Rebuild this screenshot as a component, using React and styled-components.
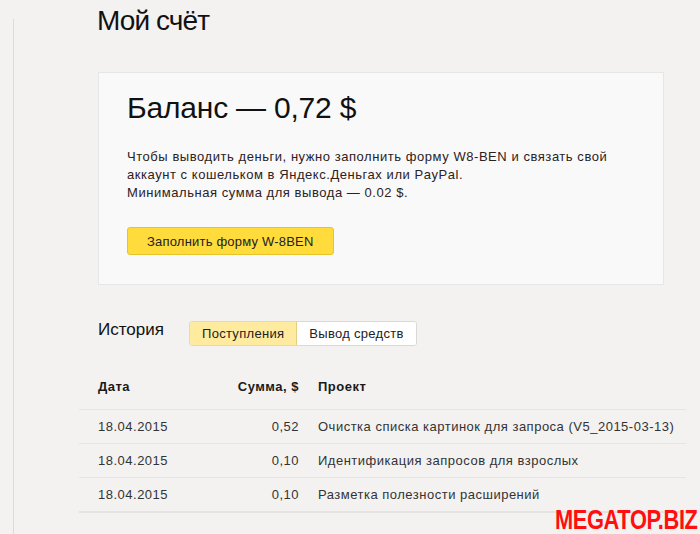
import React from 'react';
import styled, { createGlobalStyle } from 'styled-components';

const GlobalStyle = createGlobalStyle`
  html, body {
    margin: 0;
    padding: 0;
    background: #f3f2f1;
    font-family: "Liberation Sans", Arial, sans-serif;
    color: #222;
  }
`;

const Page = styled.div`
  position: relative;
  display: flex;
  width: 700px;
  height: 534px;
  overflow: hidden;
`;

const Rail = styled.div`
  flex: 0 0 13px;
  margin-top: 19px;
  border-right: 1px solid #dcdbda;
`;

const Main = styled.main`
  display: flex;
  flex-direction: column;
  width: 566px;
  padding: 4px 0 0 84px;
`;

const Title = styled.h1`
  margin: 0 0 0 -1px;
  font-size: 28px;
  line-height: 34px;
  font-weight: normal;
  letter-spacing: -0.9px;
  color: #111;
`;

const Card = styled.section`
  margin-top: 34px;
  padding: 17px 29px 29px 28px;
  background: #faf9fa;
  border: 1px solid #e7e6e6;
`;

const CardBody = styled.div`
  display: flex;
  flex-direction: column;
`;

const Balance = styled.h2`
  margin: 0;
  font-size: 30px;
  line-height: 36px;
  font-weight: normal;
  letter-spacing: -0.2px;
  color: #111;
`;

const Note = styled.p`
  margin: 22px 0 0;
  font-size: 13px;
  line-height: 18px;
  letter-spacing: 0.55px;
  color: #2b2222;
  white-space: nowrap;
`;

const YellowButton = styled.button`
  display: inline-flex;
  align-items: center;
  align-self: flex-start;
  height: 28px;
  margin-top: 25px;
  padding: 0 19px;
  font-family: inherit;
  font-size: 13px;
  letter-spacing: 0.2px;
  color: #222;
  background: #ffdc3c;
  border: 1px solid #e7c52a;
  border-radius: 3px;
`;

const HistoryBar = styled.div`
  display: flex;
  align-items: flex-start;
  margin-top: 36px;
`;

const HistoryTitle = styled.h3`
  width: 91px;
  margin: -1px 0 0;
  font-size: 17px;
  line-height: 20px;
  font-weight: normal;
  color: #111;
`;

const Segmented = styled.div`
  display: flex;
  height: 25px;
  border: 1px solid #dbd9d5;
  border-radius: 3px;
  overflow: hidden;
  box-sizing: border-box;
`;

const Segment = styled.button`
  padding: 0 12px;
  font-family: inherit;
  font-size: 13px;
  letter-spacing: 0.3px;
  color: #222;
  background: ${p => (p.active ? '#ffeba0' : '#fff')};
  border: none;
  border-right: ${p => (p.active ? '1px solid #e2cf85' : 'none')};
`;

const Table = styled.div`
  margin: 33px -22px 0 -19px;
  border-bottom: 2px solid #e4e3e2;
`;

const Row = styled.div`
  display: grid;
  grid-template-columns: 100px 82px 1fr;
  column-gap: 19px;
  align-items: center;
  padding: 0 19px;
  height: ${p => (p.head ? '30px' : '33px')};
  font-size: 13px;
  line-height: 16px;
  letter-spacing: 0.5px;
  white-space: nowrap;
  font-weight: ${p => (p.head ? 'bold' : 'normal')};
  color: ${p => (p.head ? '#1a1a1a' : '#333')};
  border-top: ${p => (p.head || p.first ? 'none' : '1px solid #e6e5e4')};
  border-bottom: ${p => (p.head ? '1px solid #e6e5e4' : 'none')};
  align-content: ${p => (p.head ? 'start' : 'center')};
`;

const Amount = styled.span`
  text-align: right;
`;

const Watermark = styled.div`
  position: absolute;
  left: 555px;
  top: 504px;
  font-family: "Liberation Sans", Arial, sans-serif;
  font-size: 28px;
  line-height: 32px;
  font-weight: bold;
  color: #ff0f0f;
  transform: scaleX(0.78);
  transform-origin: left center;
  letter-spacing: -0.5px;
`;

const rows = [
  { date: '18.04.2015', sum: '0,52', project: 'Очистка списка картинок для запроса (V5_2015-03-13)' },
  { date: '18.04.2015', sum: '0,10', project: 'Идентификация запросов для взрослых' },
  { date: '18.04.2015', sum: '0,10', project: 'Разметка полезности расширений' },
];

export default function App() {
  return (
    <Page>
      <GlobalStyle />
      <Rail />
      <Main>
        <Title>Мой счёт</Title>

        <Card>
          <CardBody>
            <Balance>Баланс — 0,72 $</Balance>
            <Note>
              Чтобы выводить деньги, нужно заполнить форму W8-BEN и связать свой
              <br />
              аккаунт с кошельком в Яндекс.Деньгах или PayPal.
              <br />
              Минимальная сумма для вывода — 0.02 $.
            </Note>
            <YellowButton>Заполнить форму W-8BEN</YellowButton>
          </CardBody>
        </Card>

        <HistoryBar>
          <HistoryTitle>История</HistoryTitle>
          <Segmented>
            <Segment active>Поступления</Segment>
            <Segment>Вывод средств</Segment>
          </Segmented>
        </HistoryBar>

        <Table>
          <Row head>
            <span>Дата</span>
            <Amount>Сумма, $</Amount>
            <span>Проект</span>
          </Row>
          {rows.map((r, i) => (
            <Row key={i} first={i === 0}>
              <span>{r.date}</span>
              <Amount>{r.sum}</Amount>
              <span>{r.project}</span>
            </Row>
          ))}
        </Table>
      </Main>
      <Watermark>MEGATOP.BIZ</Watermark>
    </Page>
  );
}
